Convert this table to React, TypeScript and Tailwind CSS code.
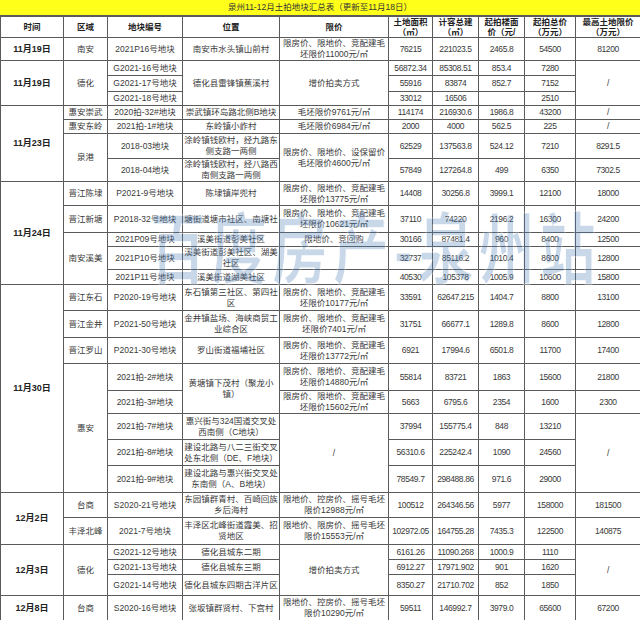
import React from 'react';

type CellProps = {
  children?: React.ReactNode;
  rs?: number;
  className?: string;
};

const Td: React.FC<CellProps> = ({ children, rs, className = '' }) => (
  <td
    rowSpan={rs}
    className={`border border-[#5a5a5a] text-center align-middle px-[1px] text-[8.5px] leading-[11px] text-[#3a3a3a] overflow-hidden ${className}`}
  >
    {children}
  </td>
);

const Date: React.FC<CellProps> = ({ children, rs }) => (
  <Td rs={rs} className="font-bold text-[9px] text-[#222]">
    {children}
  </Td>
);

const N: React.FC<CellProps> = ({ children, rs }) => (
  <Td rs={rs} className="tracking-[-0.4px] text-[8.5px]">
    {children}
  </Td>
);

const Th: React.FC<CellProps> = ({ children }) => (
  <th className="border border-[#5a5a5a] text-center align-middle font-bold text-[8.5px] leading-[10px] text-[#222] px-[1px] overflow-hidden">
    {children}
  </th>
);

export default function App() {
  return (
    <div className="relative w-[640px] h-[620px] overflow-hidden bg-white font-['Liberation_Sans','Noto_Sans_CJK_SC',sans-serif]">
      <div className="h-[16px] bg-[#ffff1a] border-b border-[#5a5a5a] flex items-center justify-center text-[8.5px] text-[#333]">
        泉州11-12月土拍地块汇总表（更新至11月18日）
      </div>
      <table className="table-fixed border-collapse w-[640px]">
        <colgroup>
          <col className="w-[63px]" />
          <col className="w-[44px]" />
          <col className="w-[75px]" />
          <col className="w-[97px]" />
          <col className="w-[109px]" />
          <col className="w-[44px]" />
          <col className="w-[46px]" />
          <col className="w-[46px]" />
          <col className="w-[51px]" />
          <col className="w-[65px]" />
        </colgroup>
        <thead>
          <tr className="h-[21px]">
            <Th>时间</Th>
            <Th>区域</Th>
            <Th>地块编号</Th>
            <Th>位置</Th>
            <Th>限价</Th>
            <Th>土地面积<br />（㎡）</Th>
            <Th>计容总建<br />（㎡）</Th>
            <Th>起拍楼面<br />价（元/</Th>
            <Th>起拍总价<br />（万元）</Th>
            <Th>最高土地限价<br />（万元）</Th>
          </tr>
        </thead>
        <tbody>
          <tr className="h-[23px]">
            <Date>11月19日</Date>
            <Td>南安</Td>
            <Td>2021P16号地块</Td>
            <Td>南安市水头镇山前村</Td>
            <Td>限房价、限地价、竞配建毛坯限价11000元/㎡</Td>
            <N>76215</N>
            <N>221023.5</N>
            <N>2465.8</N>
            <N>54500</N>
            <N>81200</N>
          </tr>

          <tr className="h-[15px]">
            <Date rs={3}>11月19日</Date>
            <Td rs={3}>德化</Td>
            <Td>G2021-16号地块</Td>
            <Td rs={3}>德化县雷锋镇蕉溪村</Td>
            <Td rs={3}>增价拍卖方式</Td>
            <N>56872.34</N>
            <N>85308.51</N>
            <N>853.4</N>
            <N>7280</N>
            <N rs={3}>/</N>
          </tr>
          <tr className="h-[16px]">
            <Td>G2021-17号地块</Td>
            <N>55916</N>
            <N>83874</N>
            <N>852.7</N>
            <N>7152</N>
          </tr>
          <tr className="h-[14px]">
            <Td>G2021-18号地块</Td>
            <N>33012</N>
            <N>16506</N>
            <N></N>
            <N>2510</N>
          </tr>

          <tr className="h-[14px]">
            <Date rs={4}>11月23日</Date>
            <Td>惠安崇武</Td>
            <Td>2020拍-32#地块</Td>
            <Td>崇武镇环岛路北侧B地块</Td>
            <Td>毛坯限价9761元/㎡</Td>
            <N>114174</N>
            <N>216930.6</N>
            <N>1986.8</N>
            <N>43200</N>
            <N>/</N>
          </tr>
          <tr className="h-[14px]">
            <Td>惠安东岭</Td>
            <Td>2021拍-1#地块</Td>
            <Td>东岭镇小岞村</Td>
            <Td>毛坯限价6984元/㎡</Td>
            <N>2000</N>
            <N>4000</N>
            <N>562.5</N>
            <N>225</N>
            <N>/</N>
          </tr>
          <tr className="h-[25px]">
            <Td rs={2}>泉港</Td>
            <Td>2018-03地块</Td>
            <Td>涂岭镇钱欧村，经九路东侧支路一两侧</Td>
            <Td rs={2}>限房价、限地价、设保留价毛坯限价4600元/㎡</Td>
            <N>62529</N>
            <N>137563.8</N>
            <N>524.12</N>
            <N>7210</N>
            <N>8291.5</N>
          </tr>
          <tr className="h-[23px]">
            <Td>2018-04地块</Td>
            <Td>涂岭镇钱欧村，经八路西南侧支路一两侧</Td>
            <N>57849</N>
            <N>127264.8</N>
            <N>499</N>
            <N>6350</N>
            <N>7302.5</N>
          </tr>

          <tr className="h-[24px]">
            <Date rs={5}>11月24日</Date>
            <Td>晋江陈埭</Td>
            <Td>P2021-9号地块</Td>
            <Td>陈埭镇岸兜村</Td>
            <Td>限房价、限地价、竞配建毛坯限价13775元/㎡</Td>
            <N>14408</N>
            <N>30256.8</N>
            <N>3999.1</N>
            <N>12100</N>
            <N>18000</N>
          </tr>
          <tr className="h-[27px]">
            <Td>晋江新塘</Td>
            <Td className="whitespace-nowrap">P2018-32号地块</Td>
            <Td>
              <div className="flex justify-center overflow-hidden whitespace-nowrap">
                <span>新塘街道塘市社区、南塘社区</span>
              </div>
            </Td>
            <Td>限房价、限地价、竞配建毛坯限价10621元/㎡</Td>
            <N>37110</N>
            <N>74220</N>
            <N>2196.2</N>
            <N>16300</N>
            <N>24200</N>
          </tr>
          <tr className="h-[14px]">
            <Td rs={3}>南安溪美</Td>
            <Td>2021P09号地块</Td>
            <Td>溪美街道彭美社区</Td>
            <Td>限地价、竞回购</Td>
            <N>30166</N>
            <N>87481.4</N>
            <N>960</N>
            <N>8400</N>
            <N>12500</N>
          </tr>
          <tr className="h-[23px]">
            <Td>2021P10号地块</Td>
            <Td>溪美街道彭美社区、湖美社区</Td>
            <Td></Td>
            <N>32737</N>
            <N>85116.2</N>
            <N>1010.4</N>
            <N>8600</N>
            <N>12800</N>
          </tr>
          <tr className="h-[15px]">
            <Td>2021P11号地块</Td>
            <Td>溪美街道湖美社区</Td>
            <Td></Td>
            <N>40530</N>
            <N>105378</N>
            <N>1005.9</N>
            <N>10600</N>
            <N>15800</N>
          </tr>

          <tr className="h-[26px]">
            <Date rs={8}>11月30日</Date>
            <Td>晋江东石</Td>
            <Td>P2020-19号地块</Td>
            <Td>东石镇第三社区、第四社区</Td>
            <Td>限房价、限地价、竞配建毛坯限价10177元/㎡</Td>
            <N>33591</N>
            <N>62647.215</N>
            <N>1404.7</N>
            <N>8800</N>
            <N>13100</N>
          </tr>
          <tr className="h-[27px]">
            <Td>晋江金井</Td>
            <Td>P2021-50号地块</Td>
            <Td>金井镇盐场、海峡商贸工业综合区</Td>
            <Td>限房价、限地价、竞配建毛坯限价7401元/㎡</Td>
            <N>31751</N>
            <N>66677.1</N>
            <N>1289.8</N>
            <N>8600</N>
            <N>12800</N>
          </tr>
          <tr className="h-[26px]">
            <Td>晋江罗山</Td>
            <Td>P2021-30号地块</Td>
            <Td>罗山街道福埔社区</Td>
            <Td>限房价、限地价、竞配建毛坯限价13772元/㎡</Td>
            <N>6921</N>
            <N>17994.6</N>
            <N>6501.8</N>
            <N>11700</N>
            <N>17400</N>
          </tr>
          <tr className="h-[27px]">
            <Td rs={5}>惠安</Td>
            <Td>2021拍-2#地块</Td>
            <Td rs={2}>黄塘镇下茂村（聚龙小镇）</Td>
            <Td>限房价、限地价、竞配建毛坯限价14880元/㎡</Td>
            <N>55814</N>
            <N>83721</N>
            <N>1863</N>
            <N>15600</N>
            <N>21800</N>
          </tr>
          <tr className="h-[21px]">
            <Td>2021拍-3#地块</Td>
            <Td>限房价、限地价、竞配建毛坯限价15602元/㎡</Td>
            <N>5663</N>
            <N>6795.6</N>
            <N>2354</N>
            <N>1600</N>
            <N>2300</N>
          </tr>
          <tr className="h-[26px]">
            <Td>2021拍-7#地块</Td>
            <Td>惠兴街与324国道交叉处西南侧（C地块）</Td>
            <Td rs={3}>/</Td>
            <N>37994</N>
            <N>155775.4</N>
            <N>848</N>
            <N>13210</N>
            <N rs={3}>/</N>
          </tr>
          <tr className="h-[26px]">
            <Td>2021拍-8#地块</Td>
            <Td>建设北路与八二三街交叉处东北侧（DE、F地块）</Td>
            <N>56310.6</N>
            <N>225242.4</N>
            <N>1090</N>
            <N>24560</N>
          </tr>
          <tr className="h-[27px]">
            <Td>2021拍-9#地块</Td>
            <Td>建设北路与惠兴街交叉处东南侧（A、B地块）</Td>
            <N>78549.7</N>
            <N>298488.86</N>
            <N>971.6</N>
            <N>29000</N>
          </tr>

          <tr className="h-[25px]">
            <Date rs={2}>12月2日</Date>
            <Td>台商</Td>
            <Td>S2020-21号地块</Td>
            <Td>东园镇群青村、百崎回族乡后海村</Td>
            <Td>限地价、控房价、摇号毛坯限价12988元/㎡</Td>
            <N>100512</N>
            <N>264346.56</N>
            <N>5977</N>
            <N>158000</N>
            <N>181500</N>
          </tr>
          <tr className="h-[27px]">
            <Td>丰泽北峰</Td>
            <Td>2021-7号地块</Td>
            <Td>丰泽区北峰街道霞美、招贤地区</Td>
            <Td>限地价、限房价、摇号毛坯限价15553元/㎡</Td>
            <N>102972.05</N>
            <N>164755.28</N>
            <N>7435.3</N>
            <N>122500</N>
            <N>140875</N>
          </tr>

          <tr className="h-[15px]">
            <Date rs={3}>12月3日</Date>
            <Td rs={3}>德化</Td>
            <Td>G2021-12号地块</Td>
            <Td>德化县城东二期</Td>
            <Td rs={3}>增价拍卖方式</Td>
            <N>6161.26</N>
            <N>11090.268</N>
            <N>1000.9</N>
            <N>1110</N>
            <N rs={3}>/</N>
          </tr>
          <tr className="h-[15px]">
            <Td>G2021-13号地块</Td>
            <Td>德化县城东三期</Td>
            <N>6912.27</N>
            <N>17971.902</N>
            <N>901</N>
            <N>1620</N>
          </tr>
          <tr className="h-[21px]">
            <Td>G2021-14号地块</Td>
            <Td>德化县城东四期古洋片区</Td>
            <N>8350.27</N>
            <N>21710.702</N>
            <N>852</N>
            <N>1850</N>
          </tr>

          <tr className="h-[25px]">
            <Date>12月8日</Date>
            <Td>台商</Td>
            <Td>S2020-16号地块</Td>
            <Td>张坂镇群贤村、下宫村</Td>
            <Td>限地价、控房价、摇号毛坯限价10290元/㎡</Td>
            <N>59511</N>
            <N>146992.7</N>
            <N>3979.0</N>
            <N>65600</N>
            <N>67200</N>
          </tr>
        </tbody>
      </table>

      <div className="pointer-events-none absolute left-[150px] top-[212px] origin-top-left scale-y-[1.4] whitespace-nowrap text-[56px] leading-[56px] font-bold tracking-[5px] text-[#4f7fb6] opacity-30 [-webkit-text-stroke:1px_#ffffff]">
        百度房产-泉州站
      </div>
    </div>
  );
}
